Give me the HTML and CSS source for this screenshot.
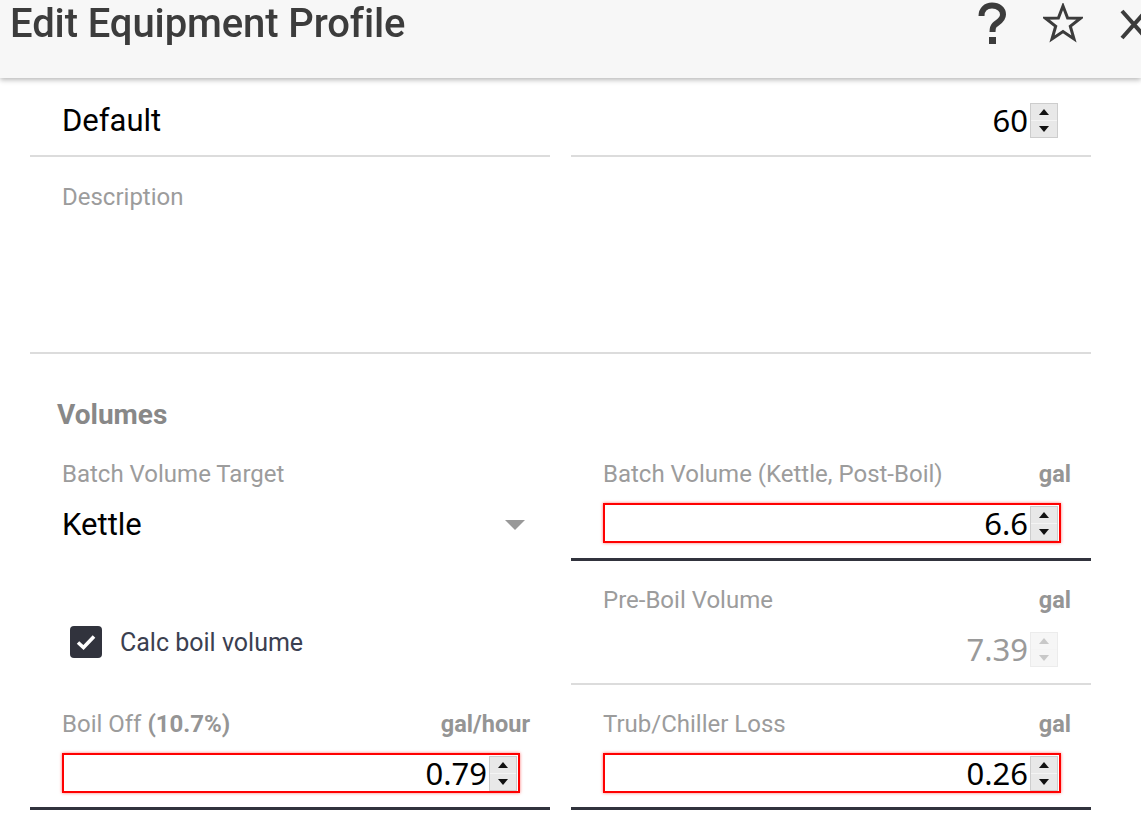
FILE: index.html
```html
<!DOCTYPE html>
<html lang="en">
<head>
<meta charset="UTF-8">
<meta name="viewport" content="width=device-width, initial-scale=1.0">
<title>Edit Equipment Profile</title>
<link rel="stylesheet" href="styles.css">
</head>
<body>
<div class="topbar">
    <h1 class="title">Edit Equipment Profile</h1>
    <div class="actions">
        <svg class="action help" width="30" height="42" viewBox="0 0 30 42" aria-label="Help">
            <path d="M4.5 14 C4.5 7.5 9 3.5 15 3.5 C21.5 3.5 26 7.5 26 12.5 C26 18.5 20.5 20 17.5 23 C16 24.5 15.5 26 15.5 30" fill="none" stroke="#3c3c3c" stroke-width="6"/>
            <rect x="12" y="35" width="7" height="7" fill="#3c3c3c"/>
        </svg>
        <svg class="action star" width="40" height="40" viewBox="0 0 40 40">
            <path d="M20 3 L24.6 15 L37.5 15.3 L27.3 23.2 L31 36 L20 28.6 L9 36 L12.7 23.2 L2.5 15.3 L15.4 15 Z" fill="none" stroke="#3c3c3c" stroke-width="3" stroke-linejoin="miter"/>
        </svg>
        <svg class="action close" width="30" height="40" viewBox="0 0 30 40">
            <path d="M3 8 L27 35 M27 8 L3 35" stroke="#3c3c3c" stroke-width="4"/>
        </svg>
    </div>
</div>

<div class="page">
    <div class="grid">
        <div class="field">
            <div class="label-row"><span>Name</span></div>
            <div class="value text-value">Default</div>
        </div>
        <div class="field">
            <div class="label-row"><span>Boil Time</span><span class="unit">minutes</span></div>
            <div class="box plain">
                <span class="num">60</span>
                <span class="spinner"><i class="up"></i><i class="down"></i></span>
            </div>
        </div>
        <div class="field wide description">
            <div class="label-row"><span>Description</span></div>
        </div>
    </div>

    <h2 class="section">Volumes</h2>

    <div class="grid">
        <div class="field no-line">
            <div class="label-row"><span>Batch Volume Target</span></div>
            <div class="value select-value">
                <span>Kettle</span>
                <span class="caret"></span>
            </div>
        </div>
        <div class="field strong-line">
            <div class="label-row"><span>Batch Volume (Kettle, Post-Boil)</span><span class="unit">gal</span></div>
            <div class="box invalid">
                <span class="num">6.6</span>
                <span class="spinner"><i class="up"></i><i class="down"></i></span>
            </div>
        </div>

        <div class="check-cell">
            <span class="checkbox">
                <svg width="20" height="16" viewBox="0 0 20 16"><path d="M2 8.5 L7.5 13.5 L18 2.5" fill="none" stroke="#fff" stroke-width="3.6"/></svg>
            </span>
            <span class="check-label">Calc boil volume</span>
        </div>
        <div class="field">
            <div class="label-row"><span>Pre-Boil Volume</span><span class="unit">gal</span></div>
            <div class="box plain disabled">
                <span class="num">7.39</span>
                <span class="spinner"><i class="up"></i><i class="down"></i></span>
            </div>
        </div>

        <div class="field strong-line">
            <div class="label-row"><span>Boil Off <b>(10.7%)</b></span><span class="unit">gal/hour</span></div>
            <div class="box invalid">
                <span class="num">0.79</span>
                <span class="spinner"><i class="up"></i><i class="down"></i></span>
            </div>
        </div>
        <div class="field strong-line">
            <div class="label-row"><span>Trub/Chiller Loss</span><span class="unit">gal</span></div>
            <div class="box invalid">
                <span class="num">0.26</span>
                <span class="spinner"><i class="up"></i><i class="down"></i></span>
            </div>
        </div>
    </div>
</div>
</body>
</html>
```

FILE: styles.css
```css
body {
    margin: 0;
    font-family: Roboto, "Liberation Sans", sans-serif;
    background-color: #fff;
    color: #000;
    overflow: hidden;
}

/* barra superior fija, tapa el principio del formulario */
.topbar {
    position: fixed;
    top: 0;
    left: 0;
    right: 0;
    height: 78px;
    background-color: #f7f7f7;
    box-shadow: 0 2px 5px rgba(0, 0, 0, 0.28);
    display: flex;
    align-items: flex-start;
    padding-left: 10px;
    overflow: hidden;
    z-index: 10;
}
.title {
    flex: 1;
    margin: 0;
    padding-top: 1px;
    font-size: 40px;
    font-weight: 500;
    line-height: 46px;
    color: #3c3c3c;
    letter-spacing: -0.1px;
}
.actions {
    flex: none;
    display: flex;
    align-items: flex-start;
    gap: 36px;
    margin-right: -8px;
    padding-top: 3px;
}
.action {
    display: block;
}
.help {
    margin-top: -1px;
}

.page {
    padding: 30px 50px 0 30px;
    width: 1061px;
}
.grid {
    display: grid;
    grid-template-columns: 520px 520px;
    column-gap: 21px;
}

.field {
    padding: 27px 20px 14px 32px;
    border-bottom: 2px solid #dcdcdc;
}
.field.wide {
    grid-column: 1 / -1;
}
.description {
    box-sizing: border-box;
    height: 197px;
}
.field.no-line {
    border-bottom-color: transparent;
}
.field.strong-line {
    border-bottom: 3px solid #31333d;
}
.grid:first-child .field:not(.wide) {
    padding-top: 28px;
}
.grid:first-child .description {
    padding-top: 28px;
}

.label-row {
    display: flex;
    justify-content: space-between;
    height: 24px;
    line-height: 24px;
    font-size: 24px;
    color: #9c9c9c;
}
.label-row b {
    font-weight: 700;
    color: #959595;
}
.unit {
    font-weight: 700;
    font-size: 23.5px;
    color: #959595;
}

.value {
    margin-top: 19px;
    height: 40px;
    line-height: 40px;
    font-size: 31px;
    color: #000;
}
.select-value {
    display: flex;
    justify-content: space-between;
    align-items: center;
    padding-right: 5px;
}
.caret {
    width: 0;
    height: 0;
    border-left: 10px solid transparent;
    border-right: 10px solid transparent;
    border-top: 10px solid #999;
}

/* caja de numero con flechas */
.box {
    margin-top: 17px;
    margin-right: 10px;
    height: 40px;
    box-sizing: border-box;
    border: 2px solid transparent;
    display: flex;
    align-items: center;
    justify-content: flex-end;
    padding-right: 1px;
}
.box.invalid {
    border-color: #f00;
    box-shadow: 0 0 3px rgba(255, 0, 0, 0.55);
}
.grid:first-child .box {
    margin-top: 18px;
}
.num {
    font-family: "Noto Sans", "Open Sans", sans-serif;
    font-size: 31px;
    line-height: 36px;
    margin-right: 2px;
    color: #000;
}
.spinner {
    width: 28px;
    height: 35px;
    box-sizing: border-box;
    border: 1px solid #cdcdcd;
    background-color: #e8e8e8;
    display: flex;
    flex-direction: column;
}
.spinner i {
    flex: 1;
    display: flex;
    align-items: center;
    justify-content: center;
}
.spinner i + i {
    border-top: 1px solid #f4f4f4;
}
.spinner .up::before {
    content: "";
    border-left: 5px solid transparent;
    border-right: 5px solid transparent;
    border-bottom: 6px solid #111;
}
.spinner .down::before {
    content: "";
    border-left: 5px solid transparent;
    border-right: 5px solid transparent;
    border-top: 6px solid #111;
}
.disabled .num {
    color: #9a9a9a;
}
.disabled .spinner {
    background-color: #f6f6f6;
    border-color: #ececec;
}
.disabled .spinner .up::before {
    border-bottom-color: #c8c8c8;
}
.disabled .spinner .down::before {
    border-top-color: #c8c8c8;
}

.section {
    margin: 47px 0 6px 0;
    padding-left: 27px;
    font-size: 28px;
    line-height: 28px;
    font-weight: 700;
    color: #888;
}

.check-cell {
    display: flex;
    align-items: center;
    gap: 18px;
    padding: 65px 0 0 40px;
    align-self: start;
}
.checkbox {
    width: 32px;
    height: 32px;
    border-radius: 4px;
    background-color: #31333d;
    display: flex;
    align-items: center;
    justify-content: center;
}
.check-label {
    font-size: 25px;
    color: #3b4050;
}
```
